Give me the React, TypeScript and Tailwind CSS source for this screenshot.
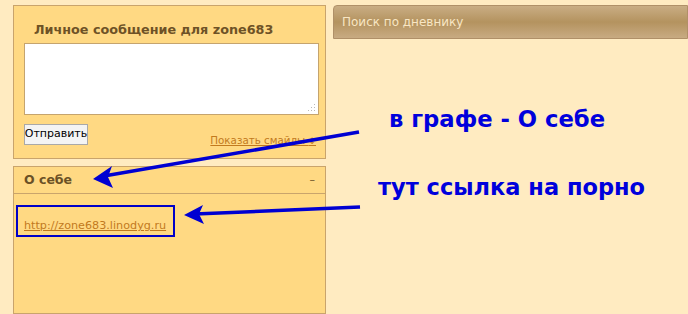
import React from "react";

export default function App() {
  const f = { fontFamily: '"DejaVu Sans", Verdana, sans-serif' };
  return (
    <div
      className="relative w-[688px] h-[314px] overflow-hidden bg-[#FFEBC1] flex gap-[7px] pl-[13px] pt-[5px]"
      style={f}
    >
      {/* left column */}
      <div className="w-[313px] flex flex-col gap-[7px] shrink-0">
        <div className="h-[154px] border border-[#c9a46c] bg-[#FFD983] flex flex-col">
          <div className="pl-[20px] pt-[16px] h-[37px] text-[12.75px] leading-[16px] font-bold text-[#6e5226]">
            Личное сообщение для zone683
          </div>
          <div className="ml-[10px] w-[295px] h-[72px] border border-[#c5a46e] bg-white relative">
            <svg className="absolute right-[2px] bottom-[2px]" width="8" height="8" viewBox="0 0 8 8">
              <rect x="6" y="0" width="1" height="1" fill="#b9b9b9" />
              <rect x="3" y="3" width="1" height="1" fill="#b9b9b9" />
              <rect x="6" y="3" width="1" height="1" fill="#b9b9b9" />
              <rect x="0" y="6" width="1" height="1" fill="#b9b9b9" />
              <rect x="3" y="6" width="1" height="1" fill="#b9b9b9" />
              <rect x="6" y="6" width="1" height="1" fill="#b9b9b9" />
            </svg>
          </div>
          <div className="mt-[9px] ml-[10px] mr-[9px] flex items-start justify-between">
            <div className="w-[64px] h-[21px] border border-[#a9a9a9] bg-[#f4f4f4] text-[11px] text-black flex items-center justify-center">
              Отправить
            </div>
            <div className="mt-[9px] text-[10.3px] leading-[14px] text-[#c27a1e] underline">
              Показать смайлы <span className="text-[9px] no-underline">↕</span>
            </div>
          </div>
        </div>
        <div className="flex-1 border border-[#c9a46c] bg-[#FFD983] flex flex-col">
          <div className="h-[27px] border-b border-[#c9a46c] flex items-center justify-between pl-[10px] pr-[10px]">
            <span className="text-[12.5px] font-bold text-[#6b5126]">О себе</span>
            <span className="text-[11px] text-[#6b5126]">–</span>
          </div>
          <div className="pl-[10px] pt-[18px]">
            <span className="text-[11.2px] leading-[14px] text-[#c27a1e] underline">
              http://zone683.linodyg.ru
            </span>
          </div>
        </div>
      </div>

      {/* right column */}
      <div className="flex-1 flex flex-col">
        <div className="h-[34px] rounded-tl-[4px] border border-[#b09068] bg-gradient-to-b from-[#c9ad84] via-[#b4935f] to-[#c8ab82] flex items-center pl-[8px]">
          <span className="text-[12px] text-[#f8e6c4]">Поиск по дневнику</span>
        </div>
      </div>

      {/* annotations overlay */}
      <div className="absolute left-[389px] top-[105px] text-[22.7px] leading-[28px] font-bold text-[#0000dc] whitespace-nowrap">
        в графе - О себе
      </div>
      <div className="absolute left-[378px] top-[173px] text-[22.5px] leading-[28px] font-bold text-[#0000dc] whitespace-nowrap">
        тут ссылка на порно
      </div>
      <div className="absolute left-[16px] top-[205px] w-[159px] h-[32px] border-2 border-[#0000c8]" />
      <svg className="absolute left-0 top-0" width="688" height="314" viewBox="0 0 688 314">
        <line x1="359" y1="132" x2="104" y2="176" stroke="#0000d2" strokeWidth="3.5" />
        <polygon points="93,179 112,166 108,177 113,188" fill="#0000d2" />
        <line x1="360" y1="207" x2="195" y2="214" stroke="#0000d2" strokeWidth="3.5" />
        <polygon points="184,215 203,205 199,214 204,224" fill="#0000d2" />
      </svg>
    </div>
  );
}
